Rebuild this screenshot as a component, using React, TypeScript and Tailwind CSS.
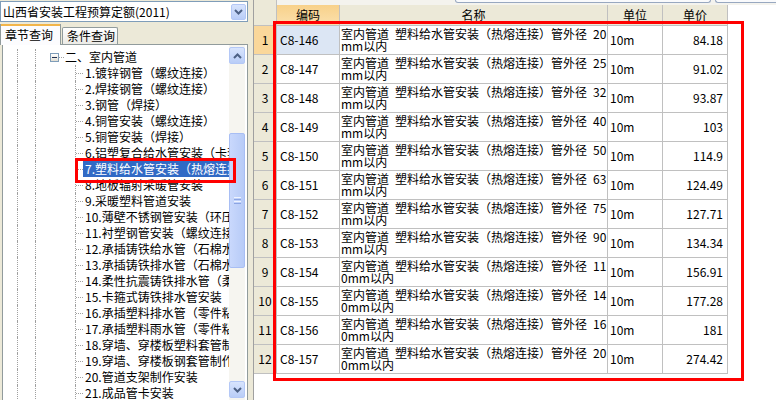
import React from 'react';

const TREE = [
  '1.镀锌钢管（螺纹连接）',
  '2.焊接钢管（螺纹连接）',
  '3.钢管（焊接）',
  '4.铜管安装（螺纹连接）',
  '5.铜管安装（焊接）',
  '6.铝塑复合给水管安装（卡套连接）',
  '7.塑料给水管安装（热熔连接）',
  '8.地板辐射采暖管安装',
  '9.采暖塑料管道安装',
  '10.薄壁不锈钢管安装（环压连接）',
  '11.衬塑钢管安装（螺纹连接）',
  '12.承插铸铁给水管（石棉水泥接口）',
  '13.承插铸铁排水管（石棉水泥接口）',
  '14.柔性抗震铸铁排水管（柔性接口）',
  '15.卡箍式铸铁排水管安装',
  '16.承插塑料排水管（零件粘接）',
  '17.承插塑料雨水管（零件粘接）',
  '18.穿墙、穿楼板塑料套管制作安装',
  '19.穿墙、穿楼板钢套管制作安装',
  '20.管道支架制作安装',
  '21.成品管卡安装',
];

const ROWS = [
  { code: 'C8-146', d: '20', price: '84.18' },
  { code: 'C8-147', d: '25', price: '91.02' },
  { code: 'C8-148', d: '32', price: '93.87' },
  { code: 'C8-149', d: '40', price: '103' },
  { code: 'C8-150', d: '50', price: '114.9' },
  { code: 'C8-151', d: '63', price: '124.49' },
  { code: 'C8-152', d: '75', price: '127.71' },
  { code: 'C8-153', d: '90', price: '134.34' },
  { code: 'C8-154', d: '110', price: '156.91' },
  { code: 'C8-155', d: '140', price: '177.28' },
  { code: 'C8-156', d: '160', price: '181' },
  { code: 'C8-157', d: '200', price: '274.42' },
];

const Chevron = ({ up }: { up?: boolean }) => (
  <svg width="9" height="6" viewBox="0 0 9 6">
    <path
      d={up ? 'M1 5 L4.5 1.5 L8 5' : 'M1 1 L4.5 4.5 L8 1'}
      fill="none"
      stroke="#4D6185"
      strokeWidth="2"
    />
  </svg>
);

const ScrollBtn = ({ up }: { up?: boolean }) => (
  <div className="h-[17px] w-full shrink-0 rounded-[2px] border border-[#B4C8F6] bg-gradient-to-b from-[#D8E4FD] to-[#B9CDF7] flex items-center justify-center">
    <Chevron up={up} />
  </div>
);

const dot = 'h-full shrink-0 border-l border-dotted border-[#A0A0A0]';

const App: React.FC = () => {
  return (
    <div className="relative w-[776px] h-[400px] flex overflow-hidden bg-[#ECE9D8] text-black text-[12px] font-['Noto_Sans_CJK_SC',sans-serif]">
      {/* left: chapter tree */}
      <div className="w-[248px] shrink-0 flex flex-col">
        <div className="mt-[1px] h-[21px] flex items-center border border-[#7F9DB9] bg-white">
          <span className="flex-1 pl-[2px] leading-[16px] whitespace-nowrap">山西省安装工程预算定额(2011)</span>
          <div className="w-[15px] h-[16px] mr-[1px] rounded-[2px] border border-[#B4C8F6] bg-gradient-to-b from-[#D8E4FD] to-[#B9CDF7] flex items-center justify-center">
            <Chevron />
          </div>
        </div>

        <div className="mt-[2px] h-[20px] flex items-end">
          <div className="relative z-10 w-[61px] h-[21px] -mb-[1px] border-x border-[#919B9C] bg-[#FCFCFE] flex flex-col">
            <div className="h-[2px] bg-[#F2B54A]" />
            <span className="pl-[4px] leading-[18px]">章节查询</span>
          </div>
          <div className="w-[56px] h-[17px] ml-[1px] border border-b-0 border-[#919B9C] rounded-t-[2px] bg-gradient-to-b from-white to-[#ECEBE6] pl-[4px] leading-[16px]">
            条件查询
          </div>
        </div>

        <div className="ml-[2px] w-[246px] flex-1 min-h-0 flex border-t border-x border-[#919B9C] bg-white">
          <div className="w-[226px] shrink-0 pt-[4px] overflow-hidden">
            <div className="flex h-[16px] items-center">
              <div className="w-[14px] h-full shrink-0" />
              <div className={`w-[18px] ${dot}`} />
              <div className={`w-[15px] ${dot}`} />
              <div className="w-[9px] h-[9px] shrink-0 border border-[#7F9DB9] bg-gradient-to-b from-white to-[#E2DED3] flex items-center justify-center">
                <div className="w-[5px] h-[1px] bg-[#1F2F50]" />
              </div>
              <div className="w-[5px] shrink-0 border-t border-dotted border-[#A0A0A0]" />
              <span className="ml-[1px] shrink-0 leading-[16px] whitespace-nowrap">二、室内管道</span>
            </div>
            {TREE.map((t, i) => (
              <div key={t} className="flex h-[16px] items-center">
                <div className="w-[14px] h-full shrink-0" />
                <div className={`w-[18px] ${dot}`} />
                <div className={`w-[40px] ${dot}`} />
                <div className={`w-[8px] ${dot} flex items-center`}>
                  <div className="w-full border-t border-dotted border-[#A0A0A0]" />
                </div>
                <span
                  className={
                    i === 6
                      ? 'shrink-0 pl-[2px] pr-[2px] leading-[16px] whitespace-nowrap bg-[#316AC5] text-white'
                      : 'shrink-0 pl-[2px] leading-[16px] whitespace-nowrap'
                  }
                >
                  {t}
                </span>
              </div>
            ))}
          </div>

          <div className="w-[16px] shrink-0 mr-[2px] pt-[2px] pb-[2px] flex flex-col bg-[#F6F5F0]">
            <ScrollBtn up />
            <div className="flex-1">
              <div className="mt-[69px] h-[135px] rounded-[2px] border border-[#A8BEF4] bg-gradient-to-r from-[#C9D8FC] to-[#B7CBF7] flex flex-col items-center justify-center gap-[1px]">
                <div className="w-[7px] h-[1px] bg-[#EEF3FE]" />
                <div className="w-[7px] h-[1px] bg-[#8CA5E3]" />
                <div className="w-[7px] h-[1px] bg-[#EEF3FE]" />
                <div className="w-[7px] h-[1px] bg-[#8CA5E3]" />
              </div>
            </div>
            <ScrollBtn />
          </div>
        </div>
      </div>

      {/* splitter */}
      <div className="w-[5px] shrink-0" />

      {/* right: quota grid */}
      <div className="flex-1 flex flex-col bg-white border-l border-[#A0A0A0]">
        <div className="h-[26px] flex">
          <div className="w-[23px] h-full bg-[#ECE9D8] border-r border-b border-[#C0C0C0]" />
          <div className="flex-1 flex flex-col">
            <div className="h-[5px] flex bg-[#F4F3EE]">
              <div className="w-[178px]" />
              <div className="w-[256px] h-[3px] border-x border-b border-[#98A8C0] rounded-b-[3px] bg-[#F9FAFC]" />
              <div className="w-[4px]" />
              <div className="flex-1 h-[3px] border-l border-b border-[#98A8C0] rounded-bl-[3px] bg-[#F9FAFC]" />
            </div>
            <div className="h-[21px] flex">
              <div className="w-[63px] border-r border-b border-[#C0C0C0] bg-gradient-to-b from-[#F8D18A] to-[#FBE0AC] flex items-center justify-center leading-[16px]">编码</div>
              <div className="w-[268px] border-r border-b border-[#C0C0C0] bg-[#ECE9D8] flex items-center justify-center leading-[16px]">名称</div>
              <div className="w-[55px] border-r border-b border-[#C0C0C0] bg-[#ECE9D8] flex items-center justify-center leading-[16px]">单位</div>
              <div className="w-[65px] border-r border-b border-[#C0C0C0] bg-[#ECE9D8] flex items-center justify-center leading-[16px]">单价</div>
              <div className="flex-1" />
            </div>
          </div>
        </div>

        {ROWS.map((r, i) => (
          <div key={r.code} className="h-[29px] flex">
            <div
              className={
                i === 0
                  ? 'w-[23px] border-r border-b border-[#C0C0C0] bg-[#FAD79A] flex items-center justify-center'
                  : 'w-[23px] border-r border-b border-[#C0C0C0] bg-[#ECE9D8] flex items-center justify-center'
              }
            >
              {i + 1}
            </div>
            <div
              className={
                i === 0
                  ? 'w-[63px] border-r border-b border-[#C0C0C0] bg-[#DCE6F4] pl-[3px] flex items-center'
                  : 'w-[63px] border-r border-b border-[#C0C0C0] pl-[3px] flex items-center'
              }
            >
              {r.code}
            </div>
            <div className="w-[268px] border-r border-b border-[#C0C0C0] pl-[1px] pt-[2px] leading-[12px] whitespace-pre overflow-hidden">
              <div>{'室内管道\u2002塑料给水管安装（热熔连接）管外径\u2002' + r.d.slice(0, 2)}</div>
              <div>{r.d.slice(2) + 'mm以内'}</div>
            </div>
            <div className="w-[55px] border-r border-b border-[#C0C0C0] pl-[2px] flex items-center">10m</div>
            <div className="w-[65px] border-r border-b border-[#C0C0C0] pr-[4px] flex items-center justify-end">{r.price}</div>
            <div className="flex-1" />
          </div>
        ))}
      </div>

      {/* red annotation boxes */}
      <div className="absolute left-[75px] top-[158px] w-[161px] h-[25px] border-[3px] border-[#FF0000]" />
      <div className="absolute left-[273px] top-[21px] w-[471px] h-[360px] border-[3px] border-[#FF0000]" />
    </div>
  );
};

export default App;
